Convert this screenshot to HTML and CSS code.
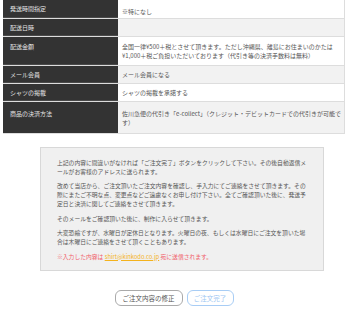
FILE: index.html
```html
<!DOCTYPE html>
<html lang="ja">
<head>
<meta charset="utf-8">
<link rel="stylesheet" href="styles.css">
</head>
<body>
<div class="page">
  <div class="table">
    <div class="row first">
      <div class="th">発送時間指定</div>
      <div class="td">※特になし</div>
    </div>
    <div class="row alt">
      <div class="th">配送日時</div>
      <div class="td"></div>
    </div>
    <div class="row">
      <div class="th">配送金額</div>
      <div class="td">全国一律¥500＋税とさせて頂きます。ただし沖縄県、離島にお住まいのかたは<br>¥1,000＋税ご負担いただいております（代引き等の決済手数料は無料）</div>
    </div>
    <div class="row alt">
      <div class="th">メール会員</div>
      <div class="td">メール会員になる</div>
    </div>
    <div class="row">
      <div class="th">シャツの掲載</div>
      <div class="td">シャツの掲載を承諾する</div>
    </div>
    <div class="row alt last">
      <div class="th">商品の決済方法</div>
      <div class="td">佐川急便の代引き「e-collect」（クレジット・デビットカードでの代引きが可能です）</div>
    </div>
  </div>

  <div class="notice">
    <p>上記の内容に間違いがなければ「ご注文完了」ボタンをクリックして下さい。その後自動返信メールがお客様のアドレスに送られます。</p>
    <p>改めて当店から、ご注文頂いたご注文内容を確認し、手入力にてご連絡をさせて頂きます。その際にまたご不明な点、変更点などご遠慮なくお申し付け下さい。全てご確認頂いた後に、発送予定日と決済に関してご連絡をさせて頂きます。</p>
    <p>そのメールをご確認頂いた後に、制作に入らせて頂きます。</p>
    <p>大変恐縮ですが、水曜日が定休日となります。火曜日の夜、もしくは水曜日にご注文を頂いた場合は木曜日にご連絡をさせて頂くこともあります。</p>
    <p class="warn">※入力した内容は <a class="mail" href="#">shirt@kinkodo.co.jp</a> 宛に送信されます。</p>
  </div>

  <div class="buttons">
    <button class="btn back">ご注文内容の修正</button>
    <button class="btn submit">ご注文完了</button>
  </div>
</div>
</body>
</html>
```

FILE: styles.css
```css
* { box-sizing: border-box; }
html, body { margin: 0; padding: 0; background: #fff; }
body {
  font-family: "Noto Sans CJK JP", "Noto Sans", sans-serif;
  font-size: 6px;
  line-height: 9px;
  color: #555;
  width: 350px;
  height: 309px;
  overflow: hidden;
}
.page { padding: 0 5px 0 3px; }

.table {
  display: flex;
  flex-direction: column;
  border-right: 1px solid #ddd;
}
.row {
  display: grid;
  grid-template-columns: 115px 1fr;
  border-bottom: 1px solid #ddd;
}
.row .th {
  background: #333;
  color: #e4e4e4;
  padding: 4px 7px 4px;
}
.row .td {
  background: #fff;
  padding: 4px 2px 4px 4px;
  display: flex;
  align-items: center;
}
.row.alt .td { background: #f2f2f2; }
.row:nth-child(3) .th { padding-top: 4.5px; }
.row:nth-child(3) .td { padding-top: 5px; padding-bottom: 5px; }
.row.first .th { padding-top: 4px; padding-bottom: 5px; }
.row.first .td { padding-top: 7px; padding-bottom: 2px; }
.row:not(.last) .th { box-shadow: inset 0 -1px 0 #4a4a4a; }
.row.last .td, .row.last .th { padding-top: 7px; padding-bottom: 6px; }
.row.last .td { align-items: flex-start; }

.notice {
  margin: 13px 21px 0 37px;
  background: #f0f0f0;
  border: 1px solid #d8d8d8;
  padding: 9.5px 16px 9.5px 16px;
  font-size: 5.8px;
}
.notice p { margin: 0 0 5.5px 0; }
.notice .warn { color: #f0606a; margin-bottom: 0; }
.notice .mail { color: #f4b21c; text-decoration: underline; }

.buttons {
  display: flex;
  justify-content: center;
  gap: 4px;
  margin-top: 19px;
}
.btn {
  font-family: "Noto Sans CJK JP", "Noto Sans", sans-serif;
  font-size: 6.5px;
  line-height: 9px;
  background: #fff;
  border-radius: 6px;
  padding: 3px 6px;
  height: 16px;
}
.btn.back { border: 1px solid #aaa; color: #555; width: 68px; }
.btn.submit { border: 1px solid #a8cdf5; color: #9cc6f2; width: 47px; }
```
